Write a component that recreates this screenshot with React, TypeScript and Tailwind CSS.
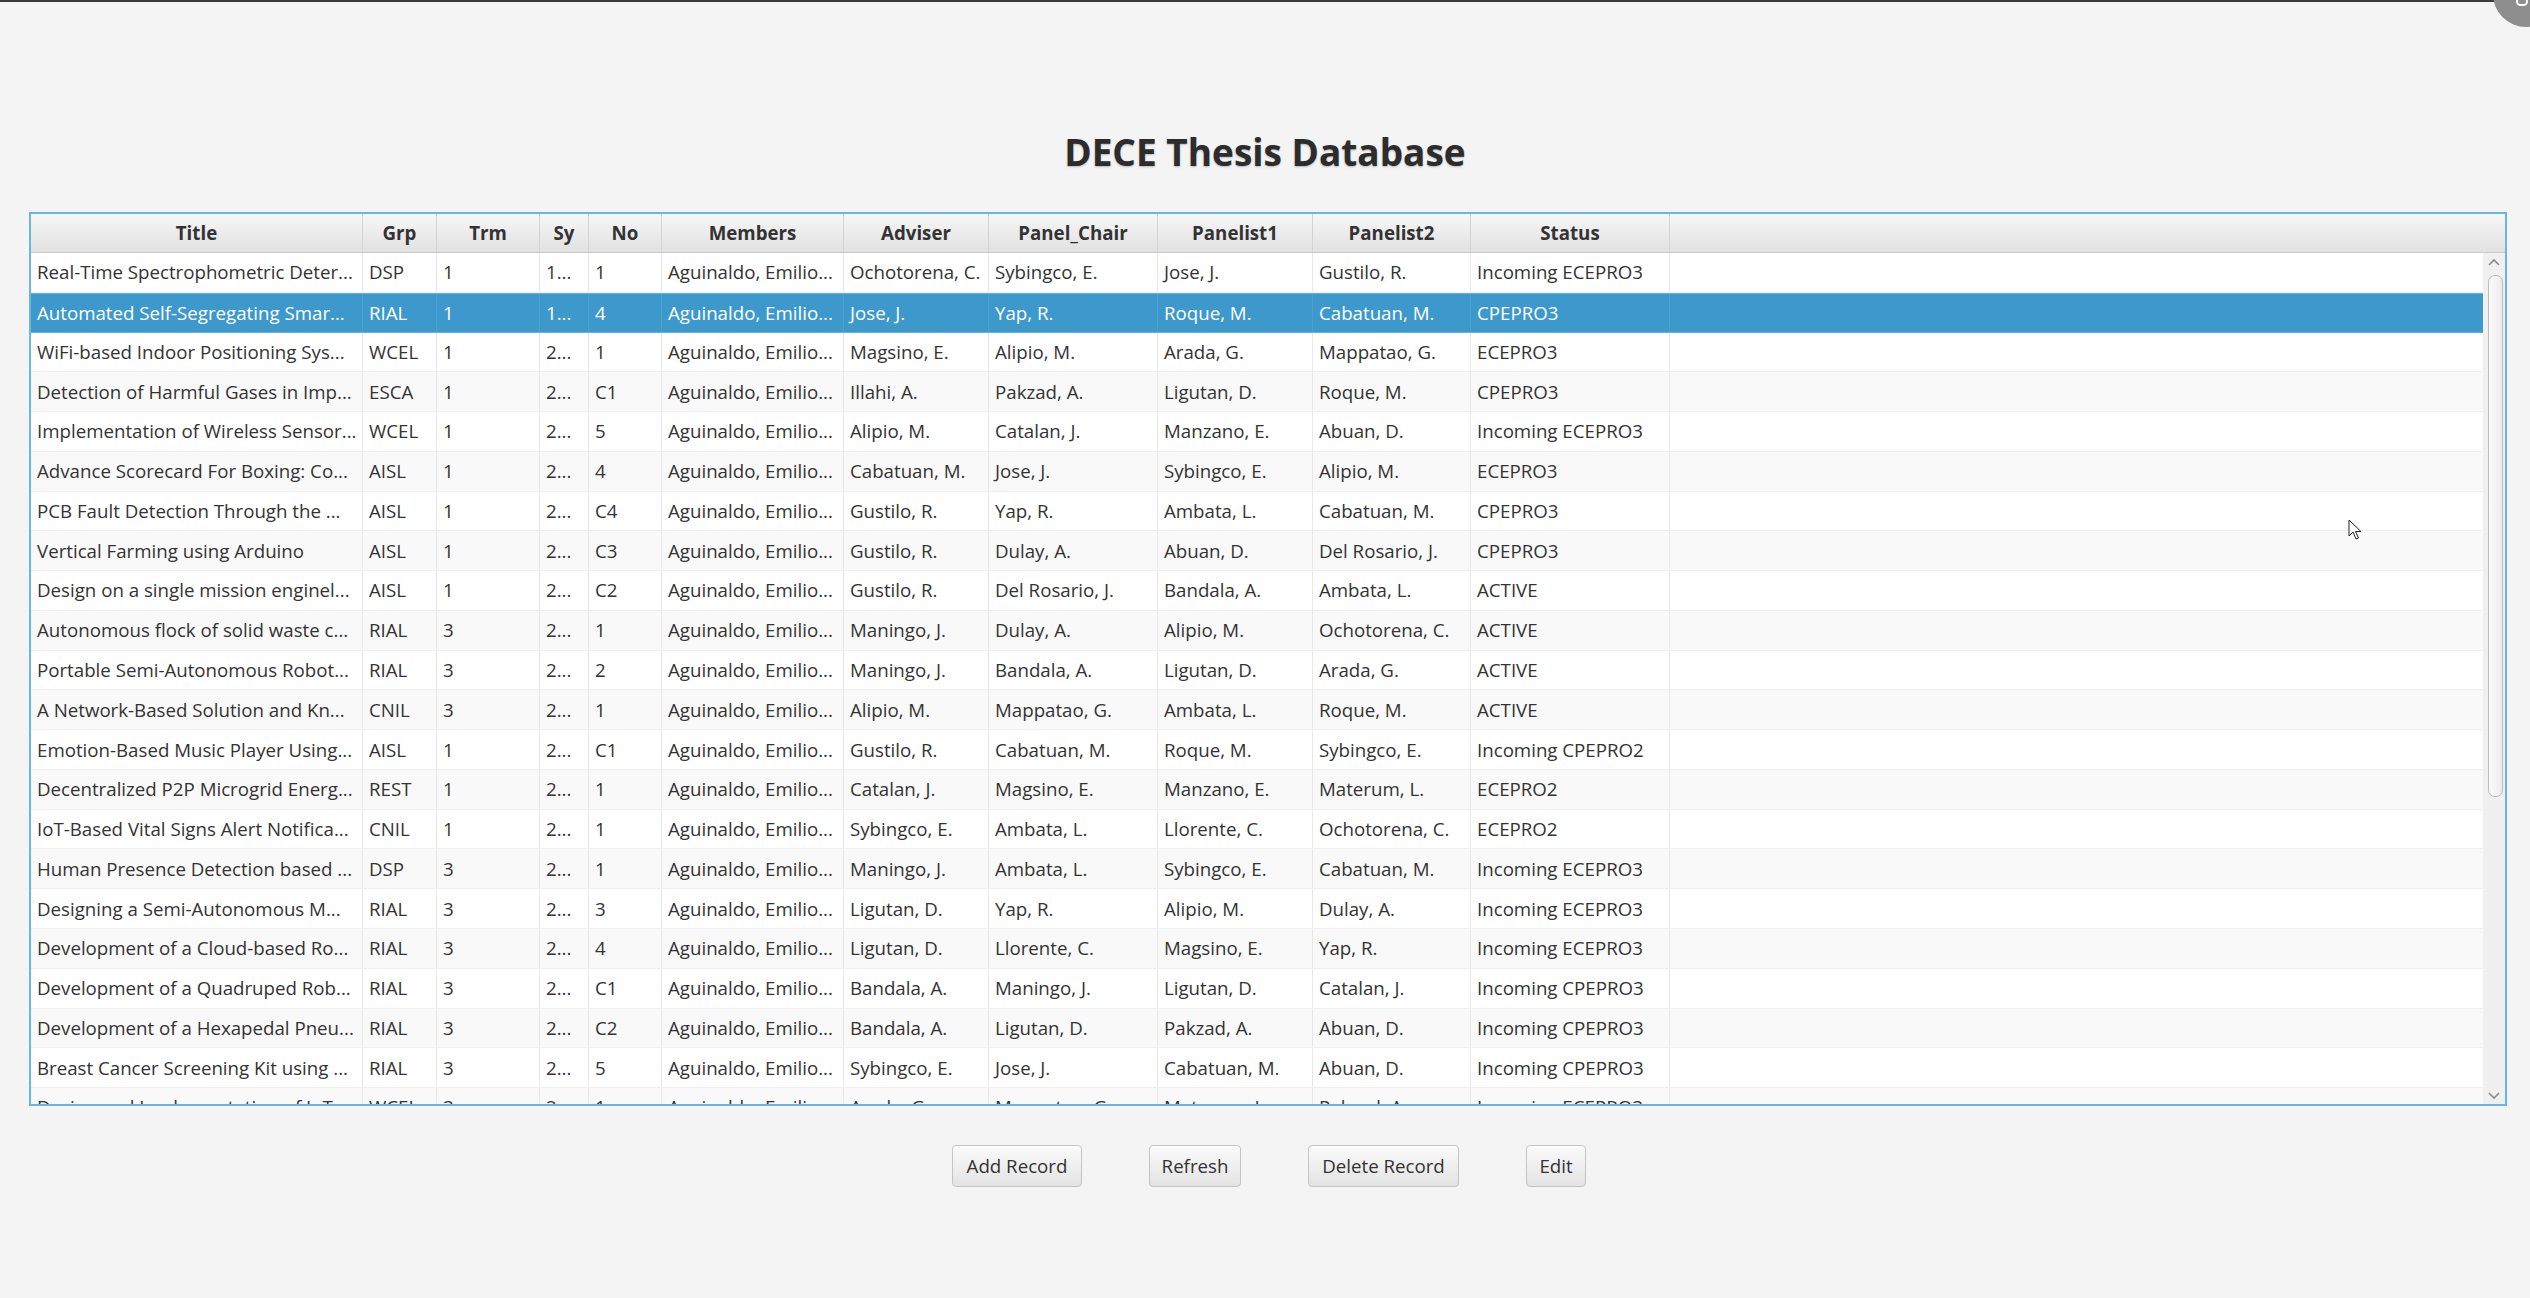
import React from "react";

type Row = [string, string, string, string, string, string, string, string, string, string, string];

const rows: Row[] = [
  ["Real-Time Spectrophometric Deter...", "DSP", "1", "1...", "1", "Aguinaldo, Emilio...", "Ochotorena, C.", "Sybingco, E.", "Jose, J.", "Gustilo, R.", "Incoming ECEPRO3"],
  ["Automated Self-Segregating Smar...", "RIAL", "1", "1...", "4", "Aguinaldo, Emilio...", "Jose, J.", "Yap, R.", "Roque, M.", "Cabatuan, M.", "CPEPRO3"],
  ["WiFi-based Indoor Positioning Sys...", "WCEL", "1", "2...", "1", "Aguinaldo, Emilio...", "Magsino, E.", "Alipio, M.", "Arada, G.", "Mappatao, G.", "ECEPRO3"],
  ["Detection of Harmful Gases in Imp...", "ESCA", "1", "2...", "C1", "Aguinaldo, Emilio...", "Illahi, A.", "Pakzad, A.", "Ligutan, D.", "Roque, M.", "CPEPRO3"],
  ["Implementation of Wireless Sensor...", "WCEL", "1", "2...", "5", "Aguinaldo, Emilio...", "Alipio, M.", "Catalan, J.", "Manzano, E.", "Abuan, D.", "Incoming ECEPRO3"],
  ["Advance Scorecard For Boxing: Co...", "AISL", "1", "2...", "4", "Aguinaldo, Emilio...", "Cabatuan, M.", "Jose, J.", "Sybingco, E.", "Alipio, M.", "ECEPRO3"],
  ["PCB Fault Detection Through the ...", "AISL", "1", "2...", "C4", "Aguinaldo, Emilio...", "Gustilo, R.", "Yap, R.", "Ambata, L.", "Cabatuan, M.", "CPEPRO3"],
  ["Vertical Farming using Arduino", "AISL", "1", "2...", "C3", "Aguinaldo, Emilio...", "Gustilo, R.", "Dulay, A.", "Abuan, D.", "Del Rosario, J.", "CPEPRO3"],
  ["Design on a single mission enginel...", "AISL", "1", "2...", "C2", "Aguinaldo, Emilio...", "Gustilo, R.", "Del Rosario, J.", "Bandala, A.", "Ambata, L.", "ACTIVE"],
  ["Autonomous flock of solid waste c...", "RIAL", "3", "2...", "1", "Aguinaldo, Emilio...", "Maningo, J.", "Dulay, A.", "Alipio, M.", "Ochotorena, C.", "ACTIVE"],
  ["Portable Semi-Autonomous Robot...", "RIAL", "3", "2...", "2", "Aguinaldo, Emilio...", "Maningo, J.", "Bandala, A.", "Ligutan, D.", "Arada, G.", "ACTIVE"],
  ["A Network-Based Solution and Kn...", "CNIL", "3", "2...", "1", "Aguinaldo, Emilio...", "Alipio, M.", "Mappatao, G.", "Ambata, L.", "Roque, M.", "ACTIVE"],
  ["Emotion-Based Music Player Using...", "AISL", "1", "2...", "C1", "Aguinaldo, Emilio...", "Gustilo, R.", "Cabatuan, M.", "Roque, M.", "Sybingco, E.", "Incoming CPEPRO2"],
  ["Decentralized P2P Microgrid Energ...", "REST", "1", "2...", "1", "Aguinaldo, Emilio...", "Catalan, J.", "Magsino, E.", "Manzano, E.", "Materum, L.", "ECEPRO2"],
  ["IoT-Based Vital Signs Alert Notifica...", "CNIL", "1", "2...", "1", "Aguinaldo, Emilio...", "Sybingco, E.", "Ambata, L.", "Llorente, C.", "Ochotorena, C.", "ECEPRO2"],
  ["Human Presence Detection based ...", "DSP", "3", "2...", "1", "Aguinaldo, Emilio...", "Maningo, J.", "Ambata, L.", "Sybingco, E.", "Cabatuan, M.", "Incoming ECEPRO3"],
  ["Designing a Semi-Autonomous M...", "RIAL", "3", "2...", "3", "Aguinaldo, Emilio...", "Ligutan, D.", "Yap, R.", "Alipio, M.", "Dulay, A.", "Incoming ECEPRO3"],
  ["Development of a Cloud-based Ro...", "RIAL", "3", "2...", "4", "Aguinaldo, Emilio...", "Ligutan, D.", "Llorente, C.", "Magsino, E.", "Yap, R.", "Incoming ECEPRO3"],
  ["Development of a Quadruped Rob...", "RIAL", "3", "2...", "C1", "Aguinaldo, Emilio...", "Bandala, A.", "Maningo, J.", "Ligutan, D.", "Catalan, J.", "Incoming CPEPRO3"],
  ["Development of a Hexapedal Pneu...", "RIAL", "3", "2...", "C2", "Aguinaldo, Emilio...", "Bandala, A.", "Ligutan, D.", "Pakzad, A.", "Abuan, D.", "Incoming CPEPRO3"],
  ["Breast Cancer Screening Kit using ...", "RIAL", "3", "2...", "5", "Aguinaldo, Emilio...", "Sybingco, E.", "Jose, J.", "Cabatuan, M.", "Abuan, D.", "Incoming CPEPRO3"],
  ["Design and Implementation of IoT-...", "WCEL", "3", "2...", "1", "Aguinaldo, Emilio...", "Arada, G.", "Mappatao, G.", "Materum, L.", "Pakzad, A.", "Incoming ECEPRO3"],
];

const headers = ["Title", "Grp", "Trm", "Sy", "No", "Members", "Adviser", "Panel_Chair", "Panelist1", "Panelist2", "Status"];
const widths = ["w-[332px]", "w-[74px]", "w-[103px]", "w-[49px]", "w-[73px]", "w-[182px]", "w-[145px]", "w-[169px]", "w-[155px]", "w-[158px]", "w-[199px]"];

const font = { fontFamily: '"Open Sans", "Noto Sans", sans-serif' };

function Btn({ label, w }: { label: string; w: string }) {
  return (
    <div
      className={`${w} h-[42px] flex items-center justify-center rounded-[4px] border border-[#c4c4c4] bg-gradient-to-b from-[#fbfbfb] to-[#e3e3e3] text-[18.7px] text-[#333] shadow-[inset_0_1px_0_#ffffff]`}
    >
      {label}
    </div>
  );
}

export default function App() {
  return (
    <div className="relative w-[2530px] h-[1298px] overflow-hidden bg-[#f4f4f4]" style={font}>
      <div className="h-[2px] bg-[#3b3b3b]" />
      <div className="absolute left-[2493px] top-[-39px] w-[66px] h-[66px] rounded-full bg-[#8e8e8e]" />
      <div className="absolute left-[2516px] top-[-3px] w-[12px] h-[9px] rounded-full border-2 border-white" />

      <div className="pt-[126px] h-[174px] text-center">
        <h1
          className="text-[37px] leading-[48px] font-bold text-[#2c2c2c]"
          style={{ textShadow: "0 1px 2px rgba(0,0,0,0.25)" }}
        >
          DECE Thesis Database
        </h1>
      </div>

      <div className="mt-[36px] ml-[29px] w-[2478px] h-[894px] border-2 border-[#68b6e1] flex flex-col bg-white">
        <div className="h-[39px] flex bg-gradient-to-b from-[#f7f7f7] to-[#e1e1e1] border-b border-[#c9c9c9] shrink-0">
          {headers.map((h, i) => (
            <div
              key={h}
              className={`${widths[i]} shrink-0 h-full flex items-center justify-center border-r border-[#d3d3d3] text-[18.7px] font-bold text-[#333]`}
            >
              {h}
            </div>
          ))}
          <div className="flex-1" />
        </div>
        <div className="flex-1 flex min-h-0">
          <div className="flex-1 overflow-hidden">
            {rows.map((r, ri) => {
              const sel = ri === 1;
              const bg = sel
                ? "bg-[#3d98cc] border-y border-[#68b1dc] text-white"
                : ri % 2 === 1
                ? "bg-[#f9f9f9] border-b border-[#efefef] text-[#333]"
                : "bg-white border-b border-[#efefef] text-[#333]";
              return (
                <div key={ri} className={`h-[39.78px] flex ${bg}`}>
                  {r.map((c, ci) => (
                    <div
                      key={ci}
                      className={`${widths[ci]} shrink-0 h-full flex items-center pl-[6px] overflow-hidden whitespace-nowrap text-[18.7px] ${
                        sel ? "border-r border-[#4aa0d1]" : "border-r border-[#e8e8e8]"
                      }`}
                    >
                      {c}
                    </div>
                  ))}
                  <div className="flex-1" />
                </div>
              );
            })}
          </div>
          <div className="w-[22px] shrink-0 bg-[#f0f0f0] relative flex flex-col items-center">
            <svg width="12" height="8" viewBox="0 0 12 8" className="mt-[5px]">
              <polyline points="1,7 6,2 11,7" fill="none" stroke="#8a8a8a" strokeWidth="1.6" />
            </svg>
            <div className="mt-[9px] ml-[2px] w-[15px] h-[522px] rounded-[7px] border border-[#bdbdbd] bg-gradient-to-r from-[#fbfbfb] to-[#ececec]" />
            <div className="flex-1" />
            <svg width="12" height="8" viewBox="0 0 12 8" className="mb-[4px]">
              <polyline points="1,1 6,6 11,1" fill="none" stroke="#8a8a8a" strokeWidth="1.6" />
            </svg>
          </div>
        </div>
      </div>

      <div className="mt-[39px] flex justify-center gap-[67px] pl-[8px]">
        <Btn label="Add Record" w="w-[130px]" />
        <Btn label="Refresh" w="w-[92px]" />
        <Btn label="Delete Record" w="w-[151px]" />
        <Btn label="Edit" w="w-[60px]" />
      </div>

      <svg className="absolute left-[2348px] top-[519px]" width="14" height="22" viewBox="0 0 14 22">
        <path d="M1 1 L1 17 L5 13 L8 20 L10.5 19 L7.5 12.5 L13 12.5 Z" fill="#ffffff" stroke="#222" strokeWidth="1" strokeLinejoin="round" />
      </svg>
    </div>
  );
}
